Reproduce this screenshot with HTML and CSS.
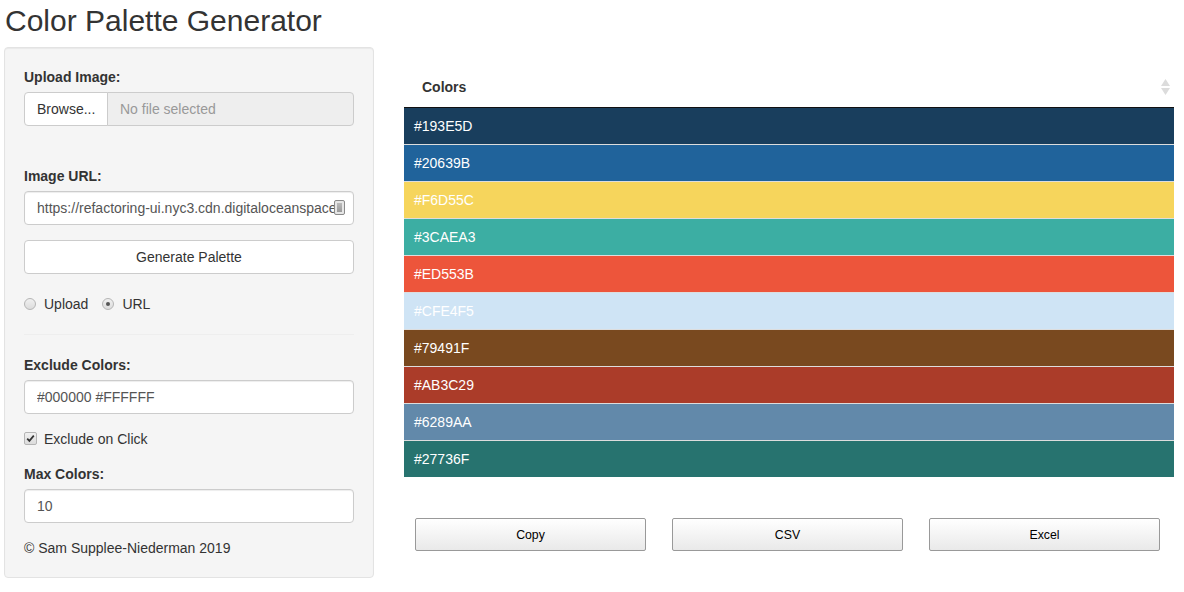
FILE: index.html
```html
<!DOCTYPE html>
<html>
<head>
<meta charset="utf-8">
<title>Color Palette Generator</title>
<link rel="stylesheet" href="styles.css">
</head>
<body>
<div class="page">
  <h2 class="title">Color Palette Generator</h2>
  <div class="layout">
    <aside class="sidebar">
      <div class="group group-file">
        <label class="label">Upload Image:</label>
        <div class="file-group">
          <span class="browse">Browse...</span>
          <span class="file-name">No file selected</span>
        </div>
      </div>
      <div class="group group-url">
        <label class="label">Image URL:</label>
        <div class="input-wrap">
          <input class="input" type="text" value="https://refactoring-ui.nyc3.cdn.digitaloceanspaces.com/previews/building-your-color-palette-01.png">
          <span class="ext-icon"><span class="ext-inner"></span></span>
        </div>
      </div>
      <button class="btn-generate" type="button">Generate Palette</button>
      <div class="radios">
        <span class="choice"><span class="radio"></span>Upload</span>
        <span class="choice"><span class="radio checked"></span>URL</span>
      </div>
      <hr class="divider">
      <div class="group group-exclude">
        <label class="label">Exclude Colors:</label>
        <input class="input" type="text" value="#000000 #FFFFFF">
      </div>
      <div class="check-row">
        <span class="choice"><span class="checkbox"><svg width="9" height="9" viewBox="0 0 9 9"><path d="M1.2 4.6 L3.4 6.9 L7.8 1.6" fill="none" stroke="#333" stroke-width="1.7"/></svg></span>Exclude on Click</span>
      </div>
      <div class="group group-max">
        <label class="label">Max Colors:</label>
        <input class="input" type="text" value="10">
      </div>
      <p class="copyright">© Sam Supplee-Niederman 2019</p>
    </aside>
    <main class="main">
      <table class="colors">
        <thead>
          <tr><th><div class="th-inner"><span>Colors</span><svg class="sort" width="9" height="16" viewBox="0 0 9 16"><path d="M4.5 0 L9 7 L0 7 Z" fill="#dcdcdc"/><path d="M0 9 L9 9 L4.5 16 Z" fill="#dcdcdc"/></svg></div></th></tr>
        </thead>
        <tbody>
          <tr><td style="background:#193E5D">#193E5D</td></tr>
          <tr><td style="background:#20639B">#20639B</td></tr>
          <tr><td style="background:#F6D55C">#F6D55C</td></tr>
          <tr><td style="background:#3CAEA3">#3CAEA3</td></tr>
          <tr><td style="background:#ED553B">#ED553B</td></tr>
          <tr><td style="background:#CFE4F5">#CFE4F5</td></tr>
          <tr><td style="background:#79491F">#79491F</td></tr>
          <tr><td style="background:#AB3C29">#AB3C29</td></tr>
          <tr><td style="background:#6289AA">#6289AA</td></tr>
          <tr><td style="background:#27736F">#27736F</td></tr>
        </tbody>
      </table>
      <div class="dt-buttons">
        <button class="dt-btn" type="button">Copy</button>
        <button class="dt-btn" type="button">CSV</button>
        <button class="dt-btn" type="button">Excel</button>
      </div>
    </main>
  </div>
</div>
</body>
</html>
```

FILE: styles.css
```css
* { box-sizing: border-box; }

body {
  margin: 0;
  font-family: "Liberation Sans", Arial, Helvetica, sans-serif;
  font-size: 14px;
  line-height: 20px;
  color: #333;
  background: #fff;
}

.page {
  padding: 4px 0 0 4px;
}

.title {
  margin: 0 0 10px 1px;
  font-size: 30px;
  font-weight: normal;
  line-height: 33px;
  color: #333;
}

.layout {
  display: flex;
  align-items: flex-start;
  gap: 30px;
}

.sidebar {
  width: 370px;
  flex: none;
  padding: 19px 19px 19px;
  background: #f5f5f5;
  border: 1px solid #e3e3e3;
  border-radius: 4px;
  box-shadow: inset 0 1px 1px rgba(0, 0, 0, 0.05);
}

.label {
  display: block;
  font-weight: bold;
  margin-bottom: 5px;
}

.group-file { margin-bottom: 40px; }
.group-url { margin-bottom: 15px; }

.file-group {
  display: flex;
  height: 34px;
}

.browse {
  flex: none;
  width: 84px;
  padding: 6px 12px;
  background: #fff;
  border: 1px solid #ccc;
  border-radius: 4px 0 0 4px;
  color: #333;
}

.file-name {
  flex: 1;
  margin-left: -1px;
  padding: 6px 12px;
  background: #eee;
  border: 1px solid #ccc;
  border-radius: 0 4px 4px 0;
  color: #999;
}

.input-wrap {
  position: relative;
}

.input {
  display: block;
  width: 100%;
  height: 34px;
  padding: 6px 12px;
  font-family: inherit;
  font-size: 14px;
  line-height: 20px;
  color: #555;
  background: #fff;
  border: 1px solid #ccc;
  border-radius: 4px;
  box-shadow: inset 0 1px 1px rgba(0, 0, 0, 0.075);
  outline: none;
}

.ext-icon {
  position: absolute;
  right: 9px;
  top: 9px;
  width: 11px;
  height: 15px;
  border: 1px solid #8a8a8a;
  border-radius: 2px;
  background: #e6e6e6;
  padding: 2px;
}

.ext-inner {
  display: block;
  width: 100%;
  height: 100%;
  background: linear-gradient(#bbb, #999);
}

.btn-generate {
  display: block;
  width: 100%;
  height: 34px;
  padding: 6px 12px;
  font-family: inherit;
  font-size: 14px;
  line-height: 20px;
  color: #333;
  background: #fff;
  border: 1px solid #ccc;
  border-radius: 4px;
  margin-bottom: 20px;
}

.radios {
  display: flex;
  gap: 14px;
}

.choice {
  display: inline-flex;
  align-items: center;
  line-height: 20px;
}

.radio {
  width: 12px;
  height: 12px;
  margin-right: 8px;
  border-radius: 50%;
  border: 1px solid #b5b5b5;
  background: linear-gradient(#f0f0f0, #dcdcdc);
  position: relative;
}

.radio.checked::after {
  content: "";
  position: absolute;
  left: 3px;
  top: 3px;
  width: 4px;
  height: 4px;
  border-radius: 50%;
  background: #555;
}

.divider {
  margin: 20px 0;
  border: 0;
  border-top: 1px solid #eee;
}

.group-exclude { margin-bottom: 14px; }

.check-row {
  margin-bottom: 15px;
}

.checkbox {
  width: 13px;
  height: 13px;
  margin-right: 7px;
  border: 1px solid #b5b5b5;
  border-radius: 2px;
  background: linear-gradient(#f0f0f0, #dcdcdc);
  display: flex;
  align-items: center;
  justify-content: center;
}

.group-max { margin-bottom: 15px; }

.copyright {
  margin: 0;
}

.main {
  width: 770px;
  flex: none;
  margin-top: 20px;
}

.colors {
  width: 100%;
  border-collapse: separate;
  border-spacing: 0;
}

.colors th {
  padding: 10px 4px 10px 18px;
  text-align: left;
  font-weight: bold;
  border-bottom: 1px solid #111;
}

.th-inner {
  display: flex;
  justify-content: space-between;
  align-items: center;
}

.colors td {
  padding: 8px 10px;
  color: #fff;
  border-top: 1px solid #ddd;
}

.colors tbody tr:first-child td {
  border-top: 0;
}

.dt-buttons {
  display: flex;
  gap: 26px;
  padding-left: 11px;
  margin-top: 41px;
}

.dt-btn {
  width: 231px;
  height: 33px;
  padding: 0;
  font-family: "Liberation Sans", Arial, sans-serif;
  font-size: 12.3px;
  color: #000;
  background: linear-gradient(to bottom, #fff 0%, #e9e9e9 100%);
  border: 1px solid #999;
  border-radius: 2px;
}
```
